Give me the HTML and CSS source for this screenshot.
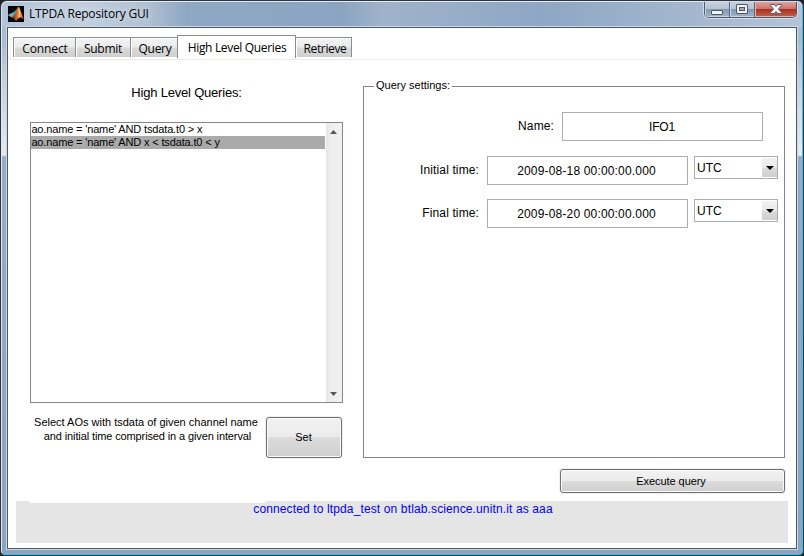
FILE: index.html
```html
<!DOCTYPE html>
<html lang="en">
<head>
<meta charset="utf-8">
<title>LTPDA Repository GUI</title>
<link rel="stylesheet" href="styles.css">
</head>
<body>
<div class="window">
  <header class="titlebar">
    <svg class="logo" width="16" height="16" viewBox="0 0 16 16">
      <defs><linearGradient id="flame" x1="0" y1="0" x2="1" y2="0"><stop offset="0" stop-color="#7a2418"/><stop offset=".45" stop-color="#ef742c"/><stop offset=".6" stop-color="#ffc06a"/><stop offset="1" stop-color="#b92e18"/></linearGradient></defs>
      <rect width="16" height="16" fill="#050608"/>
      <path d="M0 9 5 6.5 8 4 10 1 8 9 5 12 3 11Z" fill="#39a0b8"/>
      <path d="M0 9 5 6.5 6.5 8 3 11Z" fill="#7ba9b6"/>
      <path d="M4.500 11.500 7 8 8.500 5 10 1 11.200 1.300 13 6 16 13.500 13 11.200 10.500 12 8 15 6 12.200Z" fill="url(#flame)"/>
    </svg>
    <h1 class="title">LTPDA Repository GUI</h1>
    <div class="controls">
      <span class="control minimize"><svg width="24" height="14" viewBox="0 2 24 14"><rect x="6.5" y="10.500" width="11" height="4" rx=".5" fill="#f4f4f4" stroke="#535666"/></svg></span>
      <span class="control maximize"><svg width="24" height="14" viewBox="0 2 24 14"><rect x="6.500" y="4.500" width="11" height="9" rx=".5" fill="#f4f4f4" stroke="#535666"/><rect x="9.500" y="7.500" width="5" height="3" fill="#9aabc0" stroke="#535666"/></svg></span>
      <span class="control close"><svg width="41" height="14" viewBox="0 2 41 14"><path d="M15.500 4.500h4l1.500 2 1.500-2h4v1L23.500 9l3 3.500v1h-4l-1.500-2-1.500 2h-4v-1l3-3.500-3-3.500Z" fill="#f5f5f5" stroke="#5b5966"/></svg></span>
    </div>
  </header>
  <main class="client">
    <nav class="tabs">
      <span class="tab connect"><span>Connect</span></span>
      <span class="tab submit"><span>Submit</span></span>
      <span class="tab query"><span>Query</span></span>
      <span class="tab active"><span>High Level Queries</span></span>
      <span class="tab retrieve"><span>Retrieve</span></span>
    </nav>
    <div class="columns">
      <section class="picker">
        <h2 class="heading"><span>High Level Queries:</span></h2>
        <div class="listbox">
          <ul class="options">
            <li>ao.name = 'name' AND tsdata.t0 &gt; x</li>
            <li class="selected">ao.name = 'name' AND x &lt; tsdata.t0 &lt; y</li>
          </ul>
          <div class="scrollbar">
            <svg width="7" height="4" viewBox="0 0 7 4"><path d="M3.500 0 7 4H0Z" fill="#55585c"/></svg>
            <svg width="7" height="4" viewBox="0 0 7 4"><path d="M0 0h7L3.500 4Z" fill="#55585c"/></svg>
          </div>
        </div>
        <div class="help-row">
          <p class="help"><span>Select AOs with tsdata of given channel name</span><br><span class="second-line">and initial time comprised in a given interval</span></p>
          <button class="button set"><span>Set</span></button>
        </div>
      </section>
      <section class="detail">
        <div class="settings">
          <h2 class="legend"><span>Query settings:</span></h2>
          <div class="field name"><label>Name:</label><div class="input">IFO1</div></div>
          <div class="field initial"><label>Initial time:</label><div class="input time">2009-08-18 00:00:00.000</div>
            <div class="select"><span>UTC</span><i><svg width="8" height="4" viewBox="0 0 8 4"><path d="M0 0h8L4 4Z"/></svg></i></div></div>
          <div class="field final"><label>Final time:</label><div class="input time">2009-08-20 00:00:00.000</div>
            <div class="select"><span>UTC</span><i><svg width="8" height="4" viewBox="0 0 8 4"><path d="M0 0h8L4 4Z"/></svg></i></div></div>
        </div>
        <button class="button execute"><span>Execute query</span></button>
      </section>
    </div>
    <footer class="status"><span>connected to ltpda_test on btlab.science.unitn.it as aaa</span></footer>
  </main>
</div>
</body>
</html>
```
FILE: styles.css
```css
* { box-sizing: border-box; }
html { background: #20242c; }
body { margin: 0; font: 12px/14px "Liberation Sans", Arial, sans-serif; color: #000; overflow: hidden; }
h1, h2, p, ul { margin: 0; padding: 0; font-weight: normal; list-style: none; }
span, li { white-space: nowrap; }
svg { display: block; }

.window {
  width: 804px; height: 556px; padding: 0 6px 6px;
  border: 1px solid #30343f; border-radius: 7px 7px 5px 5px;
  background: linear-gradient(#b5c3d6 0, #a8bbd0 38px, #c4d1e0 80px, #e6eaf1 154px, #96abc7 156px, #8ba4c0 100%);
  box-shadow: inset 1px 1px #dfe8f2, inset -1px -1px #28c9f4;
}
.titlebar {
  height: 26px; margin: 0 -5px; padding-left: 6px; display: flex;
  background: linear-gradient(90deg, #b4c4d8 0, #c1cfdf 80px, #b0c1d4 145px, #8ea7c3 185px, #8ba4c1 340px, #a0b2cb 380px, #8ea7c4 540px, #9bb0ca 630px, #b5c4d7 100%);
  border-top: 1px solid #e2eaf3; border-radius: 6px 6px 0 0;
}
.logo { margin: 4px 5px 0 0; }
.title { font: 12px/16px "Open Sans", "Noto Sans", sans-serif; letter-spacing: -.18px; margin-top: 4px; height: 16px; text-shadow: 0 0 6px #e8eef5; }
.controls { display: flex; width: 93px; height: 16px; margin-left: auto; margin-right: 5px; border: 1px solid #4b596c; border-top: 0; border-radius: 0 0 5px 5px; box-shadow: 0 0 0 1px #d3deea; overflow: hidden; }
.control { height: 15px; background: linear-gradient(#c7d1df 0, #b2c0d1 47%, #8499b3 50%, #a2b4ca); border-right: 1px solid #58677b; box-shadow: inset 1px -1px #cbd6e3; }
.minimize { width: 25px; }
.maximize { width: 25px; }
.close { width: 41px; border: 0; background: linear-gradient(#dba49b 0, #c9766a 45%, #ad3022 50%, #c5624c 100%); box-shadow: inset 1px -1px #e4b2a6; }

.client { width: 790px; height: 522px; background: #fff; border: 1px solid #4c5766; box-shadow: 0 0 0 1px #cddae6; }
.tabs { display: flex; align-items: flex-end; height: 30px; margin: 2px 2px 0; padding: 5px 0 3px 3px; box-shadow: inset 1px 0 #f1f1f1, inset 0 -1px #ebebeb; }
.tab { height: 20px; border: 1px solid #898c95; border-bottom: 0; border-right: 0; background: linear-gradient(#f3f3f3, #ebebeb 48%, #dadada 52%, #d0d0d0); box-shadow: inset 1px 1px #fff; font: 12px/22px "Open Sans", "Noto Sans", sans-serif; text-align: center; letter-spacing: -.25px; }
.connect { width: 62px; letter-spacing: -.1px; padding-left: 1px; }
.submit { width: 55px; }
.query { width: 47px; padding-left: 2px; }
.active { width: 119px; height: 23px; background: #fff; border-right: 1px solid #898c95; line-height: 23px; margin-bottom: -1px; letter-spacing: -.33px; padding-left: 1px; }
.retrieve { width: 56px; border-left: 0; border-right: 1px solid #898c95; padding-left: 3px; letter-spacing: -.35px; }

.columns { display: flex; height: 433px; padding: 0 10px 0 22px; }
.picker { width: 313px; }
.heading { font-size: 13px; line-height: 16px; text-align: center; margin-top: 25px; height: 37px; letter-spacing: -.2px; }
.listbox { height: 281px; border: 1px solid #828790; display: flex; }
.options { flex: 1; font-size: 11px; line-height: 13px; letter-spacing: -.15px; }
.options li { height: 13px; padding-left: .4px; }
.options .selected { background: #aaa; }
.scrollbar { width: 16px; margin-left: 1px; background: linear-gradient(90deg, #e5e5e5, #eee 4px, #f1f1f1); padding: 7px 5px 6px 4px; display: flex; flex-direction: column; justify-content: space-between; }
.help-row { display: flex; margin-top: 12px; }
.help { width: 235px; font-size: 11px; line-height: 14px; text-align: center; padding-right: 3px; }
.help .second-line { letter-spacing: -.12px; padding-left: 3px; }
.button { display: block; font: 11px/14px "Liberation Sans", Arial, sans-serif; color: #000; padding: 0; border: 1px solid #707070; border-radius: 3px; box-shadow: inset 0 0 0 1px #fafafa, 0 0 0 1px #f0f0f0; background: linear-gradient(#f2f2f2, #ebebeb 49%, #dcdcdc 50%, #cfcfcf); }
.set { width: 76px; height: 41px; margin: 2px 0 0 1px; padding: 0 1px 1px 0; }
.detail { margin-left: 20px; width: 422px; }
.settings { margin-top: 26px; height: 372px; border: 1px solid #848484; }
.legend { font-size: 11px; line-height: 14px; height: 14px; margin: -9px 0 0 10px; }
.legend span { display: inline-block; background: #fff; padding: 0 2px; }
.field { display: flex; }
.field label { text-align: right; line-height: 14px; letter-spacing: .12px; }
.input { width: 201px; height: 29px; border: 1px solid #abadb3; text-align: center; line-height: 28px; margin-left: 8px; padding-right: 1px; letter-spacing: -.2px; }
.time { letter-spacing: .17px; padding-right: 2px; }
.name { margin-top: 20px; }
.name label { width: 190px; padding-top: 7px; }
.initial { margin-top: 15px; }
.final { margin-top: 14px; }
.initial label, .final label { width: 115px; padding-top: 7px; }
.select { width: 84px; height: 23px; margin-left: 6px; border: 1px solid #abadb3; padding: 0 0 0 2px; display: flex; justify-content: space-between; line-height: 22px; }
.select i { width: 15px; background: linear-gradient(#f2f2f2, #eaeaea 50%, #dcdcdc 52%, #cfcfcf); margin: 1px 0; padding: 8px 0 0 4px; }
.execute { width: 225px; height: 24px; margin: 11px 0 0 197px; padding-right: 3px; letter-spacing: -.05px; }
.status { height: 42px; margin: 8px 8px 0; background: linear-gradient(#fff, #fff) 14px 0 / 235px 2px no-repeat #e5e5e5; text-align: center; color: #00f; padding: 1px 0 0 2px; letter-spacing: .13px; }
```
